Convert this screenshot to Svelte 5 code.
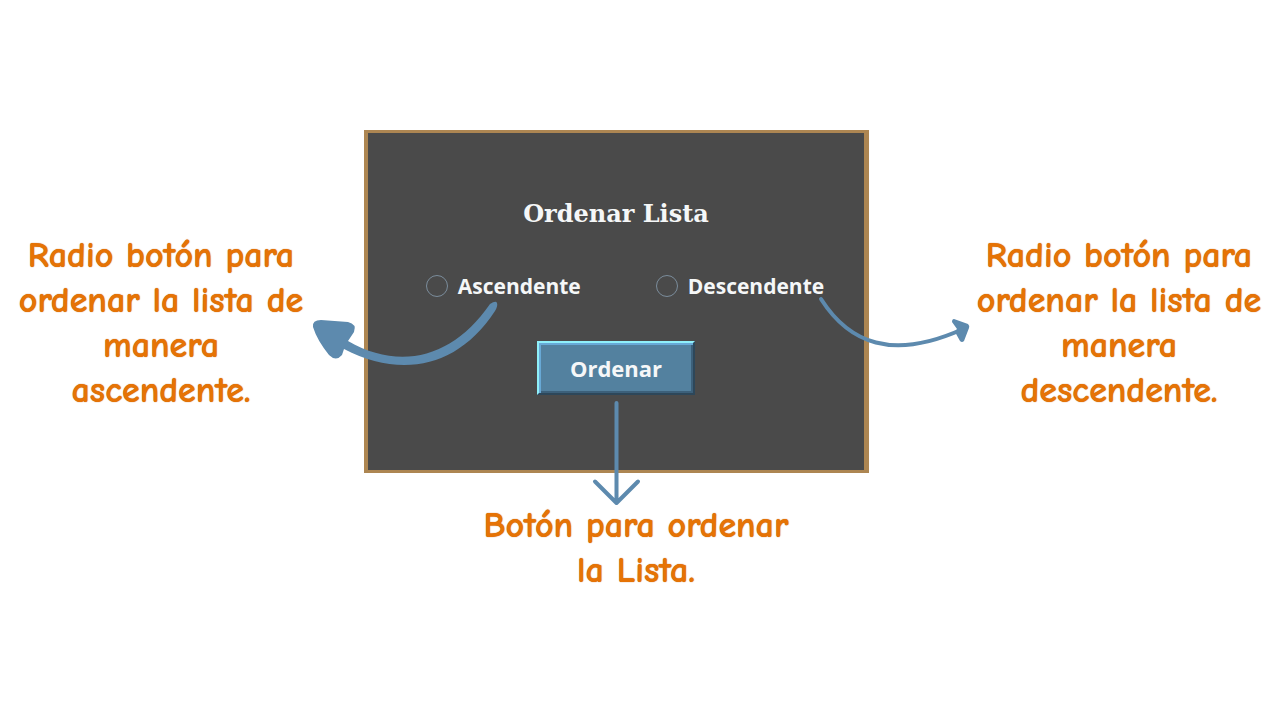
<script>
  let order = $state('');
</script>

<main>
  <p class="note left">Radio botón para<br />ordenar la lista de<br />manera<br />ascendente.</p>

  <form class="panel" onsubmit={(event) => event.preventDefault()}>
    <h1>Ordenar Lista</h1>
    <div class="options" role="radiogroup" aria-label="Ordenar Lista">
      <label><input type="radio" name="order" value="asc" bind:group={order} />Ascendente</label>
      <label><input type="radio" name="order" value="desc" bind:group={order} />Descendente</label>
    </div>
    <button type="submit">Ordenar</button>
  </form>

  <p class="note right">Radio botón para<br />ordenar la lista de<br />manera<br />descendente.</p>
  <p class="note below">Botón para ordenar<br />la Lista.</p>

  <svg class="arrows" viewBox="0 0 1280 719" aria-hidden="true">
    <g fill="none" stroke="#5d8aae" stroke-linecap="round" stroke-linejoin="round">
      <path d="M821 299C849 343 892 361 963 329" stroke-width="4" />
      <path d="M616.500 403V502M595 481.500L616.500 503L638 481.500" stroke-width="4" />
    </g>
    <g fill="#5d8aae">
      <path d="M490 304Q496 300 497 303Q498 306 495 311C457 369 400 378 344 349L342 355Q336 362 329 355Q317 340 313 327Q312 320 321 320L348 322Q357 324 354 332L348 341C400 371 453 358 490 304Z" />
      <path d="M954 319L968 324Q970 326 969 328L964 341Q962 343 960 341L955 332L957 329L952 322Q952 319 954 319Z" />
    </g>
  </svg>
</main>

<style>
  :global(body) {
    margin: 0;
    background: #fff;
  }

  main {
    position: relative;
    display: grid;
    grid-template-columns: 364fr 505fr 411fr;
    align-items: start;
    padding: 130px 0;
  }

  .note {
    margin: 0;
    color: #e67305;
    font: 700 36px/45px 'Comic Sans MS', 'Comic Neue', Lato, sans-serif;
    text-align: center;
    text-shadow: 0 0 1px #b85500;
    white-space: nowrap;
  }

  .left {
    padding: 103px 42px 0 0;
  }

  .right {
    padding: 103px 0 0 89px;
  }

  .below {
    grid-column: 2;
    padding: 30px 0 0 39px;
  }

  .panel {
    box-sizing: border-box;
    display: flex;
    flex-direction: column;
    align-items: center;
    padding: 66px 0 75px;
    border: solid #ad8652;
    border-width: 3px 5px 3px 4px;
    background: #4a4a4a;
    color: #f5f7f8;
  }

  h1 {
    margin: 0;
    font: bold 24px/30px 'DejaVu Serif', serif;
  }

  .options {
    display: flex;
    gap: 75px;
    margin: 42px 0 40px;
    padding-left: 18px;
  }

  label {
    display: flex;
    align-items: center;
    gap: 10px;
    font: bold 21px/30px 'Open Sans', sans-serif;
  }

  input {
    box-sizing: border-box;
    appearance: none;
    width: 22px;
    height: 22px;
    margin: 0;
    border: 1px solid #7b8d9c;
    border-radius: 50%;
  }

  input:checked {
    background: radial-gradient(#f5f7f8 40%, transparent 45%);
  }

  button {
    padding: 10px 31px;
    border: 2px solid;
    border-color: #8ff0fa #2d475a #2d475a #8ff0fa;
    box-shadow:
      inset 2px 2px 0 #68a9d6,
      inset -2px -2px 0 #3c607a;
    background: #53819f;
    color: #f5f7f8;
    font: bold 22px/30px 'Open Sans', sans-serif;
  }

  .arrows {
    position: absolute;
    top: 0;
    left: 0;
    width: 100%;
    pointer-events: none;
  }
</style>
